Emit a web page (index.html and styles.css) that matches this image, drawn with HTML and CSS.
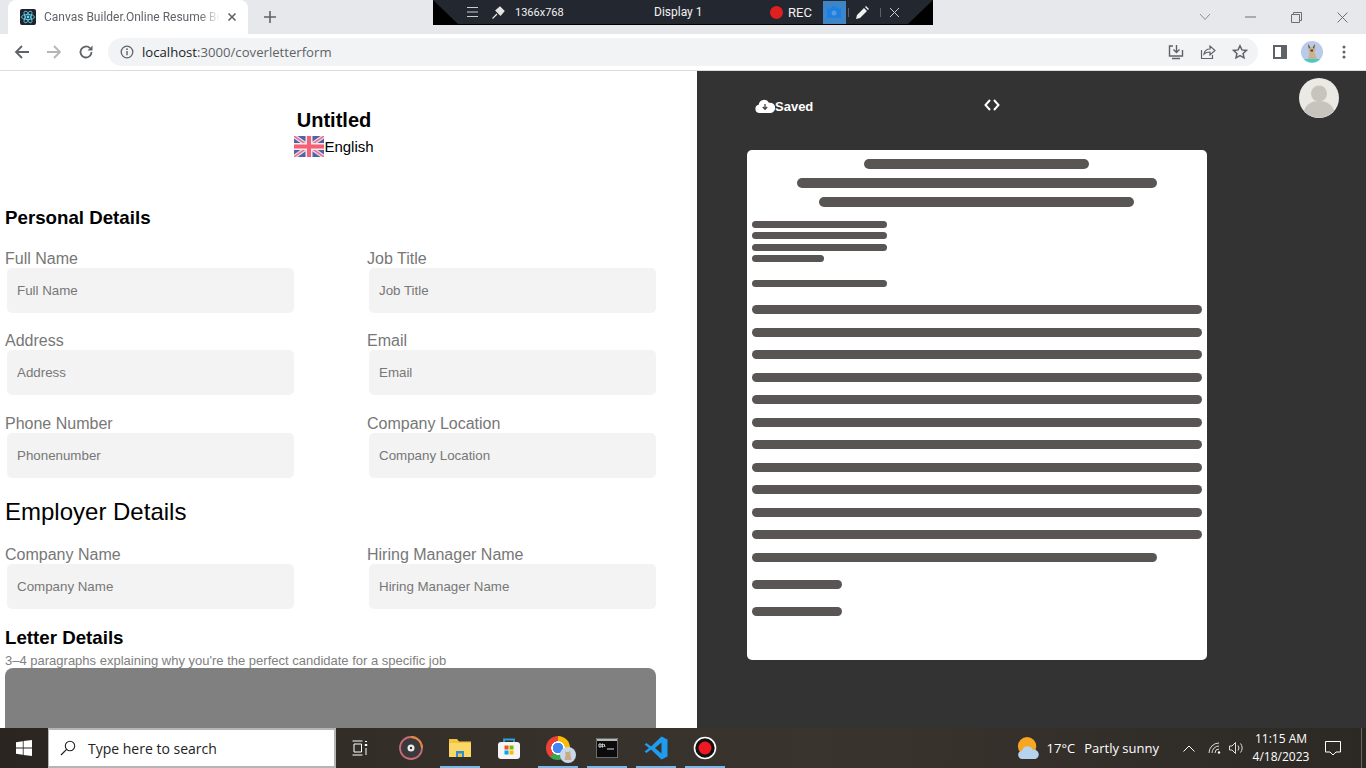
FILE: index.html
```html
<!DOCTYPE html>
<html>
  <head>
    <meta charset="UTF-8" />
    <title>Canvas Builder.Online Resume Builder</title>
    <link rel="stylesheet" href="styles.css">
  </head>
  <body>
    <div class="screen">
      <!-- browser chrome -->
      <div class="tabstrip">
        <div class="tab">
          <svg class="favicon" viewBox="0 0 16 16" width="16" height="16">
            <rect width="16" height="16" rx="2" fill="#20232a"/>
            <g fill="none" stroke="#61dafb" stroke-width="0.8">
              <ellipse cx="8" cy="8" rx="6.5" ry="2.6"/>
              <ellipse cx="8" cy="8" rx="6.5" ry="2.6" transform="rotate(60 8 8)"/>
              <ellipse cx="8" cy="8" rx="6.5" ry="2.6" transform="rotate(120 8 8)"/>
            </g>
            <circle cx="8" cy="8" r="1.4" fill="#61dafb"/>
          </svg>
          <span class="tab-title">Canvas Builder.Online Resume Builder</span>
          <svg class="tab-close" viewBox="0 0 10 10" width="10" height="10">
            <path d="M1.5 1.5l7 7M8.5 1.5l-7 7" stroke="#5f6368" stroke-width="1.6" fill="none"/>
          </svg>
        </div>
        <svg class="new-tab" viewBox="0 0 12 12" width="12" height="12">
          <path d="M6 0v12M0 6h12" stroke="#5f6368" stroke-width="1.6" fill="none"/>
        </svg>
        <div class="window-controls">
          <svg viewBox="0 0 12 8" width="12" height="8"><path d="M1 1l5 5.5L11 1" stroke="#8a8d91" fill="none"/></svg>
          <svg class="win-min" viewBox="0 0 11 2" width="11" height="2"><path d="M0 1h11" stroke="#6b6e72"/></svg>
          <svg class="win-max" viewBox="0 0 11 11" width="11" height="11"><path d="M.5 2.5h8v8h-8zM2.5 2.5v-2h8v8h-2" stroke="#6b6e72" fill="none"/></svg>
          <svg class="win-close" viewBox="0 0 11 11" width="11" height="11"><path d="M.5.5l10 10M10.5.5l-10 10" stroke="#6b6e72" fill="none"/></svg>
        </div>
      </div>

      <div class="toolbar">
        <svg class="nav-icon" viewBox="0 0 16 16" width="16" height="16"><path d="M15 8H2M8 2L2 8l6 6" stroke="#5f6368" stroke-width="1.8" fill="none"/></svg>
        <svg class="nav-icon" viewBox="0 0 16 16" width="16" height="16"><path d="M1 8h13M8 2l6 6-6 6" stroke="#b4b6b9" stroke-width="1.8" fill="none"/></svg>
        <svg class="nav-icon" viewBox="0 0 16 16" width="16" height="16"><path d="M13.5 8a5.500 5.500 0 1 1-1.600-3.900" stroke="#5f6368" stroke-width="1.8" fill="none"/><path d="M14.500 1.500v5h-5z" fill="#5f6368"/></svg>
        <div class="omnibox">
          <svg viewBox="0 0 14 14" width="14" height="14"><circle cx="7" cy="7" r="5.8" stroke="#5f6368" stroke-width="1.3" fill="none"/><path d="M7 6v4.200" stroke="#5f6368" stroke-width="1.4"/><circle cx="7" cy="4.200" r=".9" fill="#5f6368"/></svg>
          <span class="url">localhost<span class="url-path">:3000/coverletterform</span></span>
          <div class="omni-actions">
            <svg viewBox="0 0 16 16" width="16" height="16"><path d="M5 2H1.500v10h13V6M8.500 1v7M5.500 5.500l3 3 3-3M4 14.500h8" stroke="#5f6368" stroke-width="1.4" fill="none"/></svg>
            <svg viewBox="0 0 16 16" width="16" height="16"><path d="M1.500 6v8.500h11V11M4 10c.5-3 3-5 6-5V2l5 4.500L10 11V8c-2.500 0-4.500.5-6 2z" stroke="#5f6368" stroke-width="1.2" fill="none"/></svg>
            <svg viewBox="0 0 16 16" width="16" height="16"><path d="M8 1.800l1.900 4.100 4.500.5-3.300 3 .9 4.400L8 11.600l-4 2.200.9-4.400-3.300-3 4.500-.5z" stroke="#5f6368" stroke-width="1.5" fill="none"/></svg>
          </div>
        </div>
        <div class="side-panel-icon"><span></span></div>
        <svg class="profile" viewBox="0 0 22 22" width="22" height="22">
          <circle cx="11" cy="11" r="11" fill="#b9cbe8"/>
          <path d="M3 18h16a11 11 0 0 1-16 0z" fill="#3fcfc0"/>
          <path d="M7 3l2 3h3l2-3 .5 6-1 2 2.500 7H7l1.500-7-1-2z" fill="#cdb08e"/>
          <path d="M7 3l2 3-1 2zM14 3l-2 3 1 2zM9.500 8.500h2.500v2H9.500z" fill="#4b3d35"/>
        </svg>
        <svg class="menu-dots" viewBox="0 0 4 14" width="4" height="14"><circle cx="2" cy="2" r="1.5" fill="#5f6368"/><circle cx="2" cy="7" r="1.5" fill="#5f6368"/><circle cx="2" cy="12" r="1.5" fill="#5f6368"/></svg>
      </div>

      <!-- page -->
      <div class="page">
        <div class="form-pane">
          <div class="doc-head">
            <h1>Untitled</h1>
            <div class="lang">
              <svg class="flag" viewBox="0 0 30 21" width="30" height="21">
                <rect width="30" height="21" rx="3" fill="#5262a8"/>
                <path d="M0 0l30 21M30 0L0 21" stroke="#e6dfec" stroke-width="4"/>
                <path d="M0 0l30 21M30 0L0 21" stroke="#ee6f86" stroke-width="1.5"/>
                <path d="M15 0v21M0 10.500h30" stroke="#f2e9ef" stroke-width="7"/>
                <path d="M15 0v21M0 10.500h30" stroke="#f65f74" stroke-width="4"/>
              </svg>
              <span>English</span>
            </div>
          </div>

          <h3 class="section-title personal">Personal Details</h3>
          <div class="field-grid">
            <label class="field">Full Name<input type="text" placeholder="Full Name" /></label>
            <label class="field">Job Title<input type="text" placeholder="Job Title" /></label>
            <label class="field">Address<input type="text" placeholder="Address" /></label>
            <label class="field">Email<input type="text" placeholder="Email" /></label>
            <label class="field">Phone Number<input type="text" placeholder="Phonenumber" /></label>
            <label class="field">Company Location<input type="text" placeholder="Company Location" /></label>
          </div>

          <h2 class="employer-title">Employer Details</h2>
          <div class="field-grid">
            <label class="field">Company Name<input type="text" placeholder="Company Name" /></label>
            <label class="field">Hiring Manager Name<input type="text" placeholder="Hiring Manager Name" /></label>
          </div>

          <h3 class="section-title letter">Letter Details</h3>
          <p class="hint">3–4 paragraphs explaining why you're the perfect candidate for a specific job</p>
          <div class="letter-box"></div>
        </div>

        <div class="preview-pane">
          <div class="preview-head">
            <div class="saved">
              <svg viewBox="0 0 20 14" width="20" height="14">
                <path d="M4.500 14a4.200 4.200 0 0 1-.8-8.300A5.500 5.500 0 0 1 14 3.800 3.500 3.500 0 0 1 16 14z" fill="#fff"/>
                <path d="M10 5v5M7.800 8L10 10.300 12.200 8" stroke="#444" stroke-width="1.3" fill="none"/>
              </svg>
              <span>Saved</span>
            </div>
            <svg class="code-icon" viewBox="0 0 16 12" width="16" height="12"><path d="M6 1L1.500 6 6 11M10 1l4.500 5L10 11" stroke="#fff" stroke-width="2" fill="none"/></svg>
            <svg class="user-avatar" viewBox="0 0 40 40" width="40" height="40">
              <circle cx="20" cy="20" r="20" fill="#ebe9e4"/>
              <circle cx="20" cy="15.500" r="8" fill="#c6c4bd"/>
              <path d="M5 33c2-7 8-10 15-10s13 3 15 10a20 20 0 0 1-30 0z" fill="#c6c4bd"/>
            </svg>
          </div>
          <div class="paper">
            <div class="heading-bars">
              <div class="bar bar-h w-225"></div>
              <div class="bar bar-h w-360"></div>
              <div class="bar bar-h w-315"></div>
            </div>
            <div class="address-bars">
              <div class="bar bar-s w-135"></div>
              <div class="bar bar-s w-135"></div>
              <div class="bar bar-s w-135"></div>
              <div class="bar bar-s w-72"></div>
            </div>
            <div class="bar bar-s w-135 greeting"></div>
            <div class="body-bars">
              <div class="bar bar-b"></div>
              <div class="bar bar-b"></div>
              <div class="bar bar-b"></div>
              <div class="bar bar-b"></div>
              <div class="bar bar-b"></div>
              <div class="bar bar-b"></div>
              <div class="bar bar-b"></div>
              <div class="bar bar-b"></div>
              <div class="bar bar-b"></div>
              <div class="bar bar-b"></div>
              <div class="bar bar-b"></div>
              <div class="bar bar-b w-405"></div>
            </div>
            <div class="sign-bars">
              <div class="bar bar-b w-90"></div>
              <div class="bar bar-b w-90"></div>
            </div>
          </div>
        </div>
      </div>

      <!-- windows taskbar -->
      <div class="taskbar">
        <div class="start">
          <svg viewBox="0 0 16 16" width="16" height="16"><path d="M0 2.200L6.800 1.200V7.600H0zM7.600 1.100L16 0V7.600H7.600zM0 8.400H6.800V14.800L0 13.800zM7.600 8.400H16V16L7.600 14.900z" fill="#fff"/></svg>
        </div>
        <div class="search">
          <svg viewBox="0 0 16 16" width="16" height="16"><circle cx="10" cy="6" r="4.700" stroke="#222" stroke-width="1.1" fill="none"/><path d="M6.600 9.400L1 15" stroke="#222" stroke-width="1.3"/></svg>
          <span>Type here to search</span>
        </div>
        <div class="task-icons">
          <div class="task-icon">
            <svg class="task-view" viewBox="0 0 16 16" width="16" height="16"><path d="M.5 1h10M.5 15h10M2 4h7.500v8H2zM13 1.500h2M13 4.500h2v1h-2zM14 8v7" stroke="#fff" fill="none"/></svg>
          </div>
          <div class="task-icon">
            <svg viewBox="0 0 24 24" width="24" height="24">
              <circle cx="12" cy="12" r="11" fill="#3a3a3c" stroke="#c96a78" stroke-width="1.8"/>
              <path d="M12 1a11 11 0 0 1 11 11" fill="none" stroke="#e58a3c" stroke-width="1.8"/>
              <circle cx="12" cy="12" r="3.500" fill="#eee"/>
              <circle cx="12" cy="12" r="1.200" fill="#333"/>
            </svg>
          </div>
          <div class="task-icon running">
            <svg viewBox="0 0 22 20" width="22" height="20">
              <path d="M0 1h8l2 2.500h12V19H0z" fill="#f3c444"/>
              <path d="M0 5h22v14H0z" fill="#fbd866"/>
              <path d="M7 13h8v6H7z" fill="#2b8fd8"/>
              <path d="M9 15.500h4V19H9z" fill="#f3c444"/>
            </svg>
          </div>
          <div class="task-icon">
            <svg viewBox="0 0 24 24" width="24" height="24">
              <path d="M7 7V3.500h10V7" stroke="#27a6e0" stroke-width="1.8" fill="none"/>
              <rect x="1" y="6" width="22" height="17" rx="3" fill="#f4f4f4"/>
              <rect x="7.500" y="9.500" width="4" height="4" fill="#f25022"/>
              <rect x="12.500" y="9.500" width="4" height="4" fill="#7fba00"/>
              <rect x="7.500" y="14.500" width="4" height="4" fill="#00a4ef"/>
              <rect x="12.500" y="14.500" width="4" height="4" fill="#ffb900"/>
            </svg>
          </div>
          <div class="task-icon running">
            <div class="chrome-logo"></div>
            <svg class="chrome-badge" viewBox="0 0 16 16" width="16" height="16">
              <circle cx="8" cy="8" r="8" fill="#c9d8ea"/>
              <path d="M5 3l1 2h3l1-2 .5 5 1 5h-7l1-5z" fill="#c9a988"/>
            </svg>
          </div>
          <div class="task-icon running">
            <svg viewBox="0 0 22 20" width="22" height="20">
              <rect width="22" height="20" fill="#3d3d3d" stroke="#999"/>
              <rect x="1" y="3" width="20" height="16" fill="#0c0c0c"/>
              <rect x="1" y="1" width="20" height="2" fill="#b8b8b8"/>
              <path d="M3 6h2v3H3zM6 6h1v1H6zM6 8h1v1H6zM8 6l1 3M11 11h7" stroke="#ddd" fill="none"/>
            </svg>
          </div>
          <div class="task-icon running">
            <svg viewBox="0 0 24 24" width="24" height="24">
              <path d="M17.500 0.500L23.500 3.500V20.500L17.500 23.500L7 13.500L2.500 17L0.500 15.500L5 12L0.500 8.500L2.500 7L7 10.500z M17.500 6.500L11 12L17.500 17.500z" fill="#1f9cf0" fill-rule="evenodd"/>
            </svg>
          </div>
          <div class="task-icon running">
            <svg viewBox="0 0 24 24" width="24" height="24">
              <circle cx="12" cy="12" r="10.500" fill="#111" stroke="#fff" stroke-width="1.6"/>
              <circle cx="12" cy="12" r="6.500" fill="#f01822"/>
            </svg>
          </div>
        </div>
        <div class="tray">
          <svg class="weather" viewBox="0 0 24 24" width="22" height="22">
            <circle cx="11" cy="10" r="10" fill="#f6a623"/>
            <path d="M6 24a4.500 4.500 0 0 1-.5-9 6 6 0 0 1 11.500-1 5 5 0 0 1 3 10z" fill="#b5d2ee"/>
          </svg>
          <span class="temp">17°C</span>
          <span class="forecast">Partly sunny</span>
          <svg class="tray-chevron" viewBox="0 0 12 7" width="12" height="7"><path d="M.5 6.500L6 1l5.500 5.500" stroke="#fff" fill="none"/></svg>
          <svg class="tray-wifi" viewBox="0 0 14 12" width="14" height="12"><path d="M1 11a10 10 0 0 1 10-10M4 11a7 7 0 0 1 7-7M7 11a4 4 0 0 1 4-4" stroke="#ddd" fill="none"/><circle cx="11" cy="10.500" r="1.200" fill="#fff"/></svg>
          <svg class="tray-sound" viewBox="0 0 16 12" width="16" height="12"><path d="M.5 4h2.500L6.500.5v11L3 8H.5zM9 3.500a4 4 0 0 1 0 5M11.500 1.500a7 7 0 0 1 0 9" stroke="#ddd" fill="none"/></svg>
          <div class="clock"><span>11:15 AM</span><span>4/18/2023</span></div>
          <svg class="notify" viewBox="0 0 16 15" width="16" height="15"><path d="M.5.500h15v10.500h-4.500L8 14l-3-3H.5z" stroke="#fff" fill="none"/></svg>
          <div class="show-desktop"></div>
        </div>
      </div>

      <!-- screen recorder bar sits over the tab strip -->
      <div class="recorder">
        <div class="recorder-inner">
          <svg class="rec-menu" viewBox="0 0 11 10" width="11" height="10"><path d="M0 .5h11M0 5h11M0 9.500h11" stroke="#c9ccd0"/></svg>
          <svg class="rec-pin" viewBox="0 0 13 13" width="13" height="13"><path d="M0.500 12.500L5 8M4 4.500L8 1l4 4-3.500 4z" stroke="#e4e4e4" stroke-width="1.2" fill="#e4e4e4"/></svg>
          <span class="rec-size">1366x768</span>
          <span class="rec-display">Display 1</span>
          <span class="rec-dot"></span>
          <span class="rec-label">REC</span>
          <div class="rec-camera">
            <svg viewBox="0 0 14 12" width="14" height="12"><path d="M0 2.500h3.500L5 .5h4l1.500 2H14V12H0z" fill="#1a7fe6"/><circle cx="7" cy="7" r="2.500" fill="#5a9ad6"/></svg>
          </div>
          <span class="rec-sep"></span>
          <svg class="rec-pen" viewBox="0 0 13 13" width="13" height="13"><path d="M0 13l1-4 7-7 3 3-7 7zM9 1l1-1 3 3-1 1z" fill="#f0f0f0"/></svg>
          <span class="rec-sep"></span>
          <svg class="rec-close" viewBox="0 0 9 9" width="9" height="9"><path d="M0 0l9 9M9 0L0 9" stroke="#c9ccd0"/></svg>
        </div>
      </div>
    </div>
  </body>
</html>
```

FILE: styles.css
```css
* {
  box-sizing: border-box;
}

html,
body {
  margin: 0;
  height: 100%;
  overflow: hidden;
}

body {
  font-family: "Liberation Sans", Arial, sans-serif;
  background-color: #fff;
}

.screen {
  position: relative;
  width: 1366px;
  height: 768px;
  display: flex;
  flex-direction: column;
  overflow: hidden;
}

/* tab strip */
.tabstrip {
  height: 34px;
  flex-shrink: 0;
  display: flex;
  align-items: center;
  padding-left: 8px;
  background-color: #e7e8ec;
}

.tab {
  width: 240px;
  height: 34px;
  display: flex;
  align-items: center;
  padding: 0 11px 0 12px;
  background-color: #fff;
  border-radius: 8px 8px 0 0;
}

.favicon {
  flex-shrink: 0;
}

.tab-title {
  width: 176px;
  margin-left: 8px;
  overflow: hidden;
  white-space: nowrap;
  font-family: Roboto, sans-serif;
  font-size: 12px;
  color: #5f6368;
  -webkit-mask-image: linear-gradient(to right, #000 88%, transparent);
  mask-image: linear-gradient(to right, #000 88%, transparent);
}

.tab-close {
  margin-left: 7px;
  flex-shrink: 0;
}

.new-tab {
  margin-left: 16px;
}

.window-controls {
  margin-left: auto;
  display: flex;
  align-items: center;
  padding-right: 18px;
}

.win-min {
  margin-left: 34px;
}

.win-max {
  margin-left: 35px;
}

.win-close {
  margin-left: 35px;
}

/* address bar */
.toolbar {
  height: 37px;
  flex-shrink: 0;
  display: flex;
  align-items: center;
  padding: 0 18px 1px 14px;
  background-color: #fff;
  border-bottom: 1px solid #dadce0;
}

.nav-icon {
  margin-right: 16px;
}

.omnibox {
  width: 1150px;
  height: 28px;
  margin-left: -2px;
  display: flex;
  align-items: center;
  padding: 0 10px 0 12px;
  background-color: #f1f3f4;
  border-radius: 14px;
}

.url {
  margin-left: 8px;
  font-family: "Open Sans", sans-serif;
  font-size: 13.15px;
  color: #202124;
}

.url-path {
  color: #5f6368;
}

.omni-actions {
  margin-left: auto;
  display: flex;
  gap: 16px;
}

.side-panel-icon {
  width: 14px;
  height: 14px;
  margin-left: 15px;
  padding: 2px 6px 2px 2px;
  background-color: #5f6368;
}

.side-panel-icon span {
  display: block;
  height: 100%;
  background-color: #fff;
}

.profile {
  margin-left: 14px;
}

.menu-dots {
  margin-left: 19px;
}

/* page */
.page {
  flex: 1;
  min-height: 0;
  display: flex;
}

.form-pane {
  width: 697px;
  flex-shrink: 0;
  padding: 0 41px 0 5px;
  overflow: hidden;
  background-color: #fff;
}

.doc-head {
  display: flex;
  flex-direction: column;
  align-items: center;
  padding: 38px 0 0 7px;
  height: 134px;
}

.doc-head h1 {
  margin: 0;
  font-size: 20px;
  line-height: 22px;
  font-weight: bold;
  color: #000;
}

.lang {
  display: flex;
  align-items: center;
  margin-top: 5px;
  font-size: 15px;
  line-height: 21px;
  color: #000;
}

.section-title {
  margin: 0;
  font-size: 18.72px;
  line-height: 24px;
  font-weight: bold;
  color: #000;
}

.personal {
  margin-top: 1px;
}

.field-grid {
  display: grid;
  grid-template-columns: 362px 289px;
  row-gap: 19.5px;
}

.personal + .field-grid {
  margin-top: 19.75px;
}

.field {
  display: block;
  font-size: 16px;
  line-height: 17px;
  color: #777;
}

.field input {
  display: block;
  width: 287px;
  height: 45px;
  margin: 1px 0 0 2px;
  padding: 0 10px;
  border: none;
  border-radius: 5px;
  outline: none;
  background-color: #f3f3f3;
  font-family: "Liberation Sans", Arial, sans-serif;
  font-size: 13.333px;
  color: #333;
}

.field input::placeholder {
  color: #777;
  opacity: 1;
}

.employer-title {
  margin: 20.25px 0 20px;
  font-size: 24px;
  line-height: 28px;
  font-weight: normal;
  color: #000;
}

.letter {
  margin-top: 17px;
}

.hint {
  margin: 3px 0 0;
  font-size: 13px;
  line-height: 15px;
  color: #808080;
}

.letter-box {
  height: 120px;
  background-color: #808080;
  border-radius: 8px 8px 0 0;
}

/* preview */
.preview-pane {
  flex: 1;
  min-width: 0;
  padding: 0 27px 0 50px;
  background-color: #333;
}

.preview-head {
  height: 79px;
  display: flex;
  align-items: flex-start;
}

.saved {
  display: flex;
  align-items: center;
  width: 229px;
  margin: 28px 0 0 8px;
  font-size: 13px;
  font-weight: bold;
  color: #fff;
}

.saved svg {
  margin-top: -1px;
}

.code-icon {
  margin-top: 28px;
}

.user-avatar {
  margin: 7px 0 0 auto;
}

.paper {
  width: 460px;
  height: 510px;
  padding: 9px 5px 0;
  background-color: #fff;
  border-radius: 5px;
}

.bar {
  background-color: #5a5555;
  border-radius: 5px;
}

.bar-h {
  height: 10px;
}

.bar-s {
  height: 7px;
}

.bar-b {
  height: 9px;
}

.w-72 { width: 72px; }
.w-90 { width: 90px; }
.w-135 { width: 135px; }
.w-225 { width: 225px; }
.w-315 { width: 315px; }
.w-360 { width: 360px; }
.w-405 { width: 405px; }

.heading-bars {
  display: flex;
  flex-direction: column;
  align-items: center;
  gap: 9px;
  padding-right: 1px;
}

.address-bars {
  display: flex;
  flex-direction: column;
  gap: 4.5px;
  margin-top: 13.75px;
}

.greeting {
  margin-top: 18px;
}

.body-bars {
  display: flex;
  flex-direction: column;
  gap: 13.5px;
  margin-top: 17.75px;
}

.sign-bars {
  display: flex;
  flex-direction: column;
  gap: 18px;
  margin-top: 18.5px;
}

/* taskbar */
.taskbar {
  height: 40px;
  flex-shrink: 0;
  display: flex;
  align-items: center;
  background: linear-gradient(to right, #2a2520, #35302a 35%, #3a342e 60%, #2c2925);
  color: #fff;
}

.start {
  width: 48px;
  height: 40px;
  display: flex;
  align-items: center;
  justify-content: center;
}

.search {
  width: 288px;
  height: 40px;
  display: flex;
  align-items: center;
  gap: 12px;
  padding-left: 11px;
  background-color: #fff;
  border: 2px solid #b5b5b5;
  border-left-width: 1px;
  font-family: "Open Sans", sans-serif;
  font-size: 14px;
  color: #222;
}

.task-icons {
  display: flex;
  margin-left: 1px;
}

.task-icon {
  position: relative;
  width: 49px;
  height: 40px;
  display: flex;
  align-items: center;
  justify-content: center;
}

.task-icon.running::after {
  content: "";
  position: absolute;
  left: 5px;
  right: 4px;
  bottom: 0;
  height: 2px;
  background-color: #76b9ed;
}

.task-view {
  margin-right: 3px;
}

.chrome-logo {
  width: 24px;
  height: 24px;
  border-radius: 50%;
  background:
    radial-gradient(circle, #4285f4 0 5px, #fff 5.5px 6.5px, transparent 7px),
    conic-gradient(#fbbc05 0 120deg, #34a853 120deg 220deg, #ea4335 220deg 360deg);
}

.chrome-badge {
  position: absolute;
  left: 27px;
  top: 19px;
}

.tray {
  margin-left: auto;
  display: flex;
  align-items: center;
  font-family: "Open Sans", sans-serif;
  font-size: 13px;
}

.temp {
  margin-left: 8px;
}

.forecast {
  margin-left: 9px;
}

.tray-chevron {
  margin-left: 24px;
}

.tray-wifi {
  margin-left: 13px;
}

.tray-sound {
  margin-left: 7px;
}

.clock {
  display: flex;
  flex-direction: column;
  align-items: center;
  width: 60px;
  margin-left: 6px;
  font-size: 12px;
  line-height: 18px;
}

.notify {
  margin-left: 14px;
}

.show-desktop {
  width: 1px;
  height: 40px;
  margin: 0 4px 0 20px;
  background-color: #6b6763;
}

/* recorder overlay */
.recorder {
  position: absolute;
  top: 0;
  left: 433px;
  width: 500px;
  height: 25px;
  background-color: #000;
}

.recorder-inner {
  height: 24px;
  display: flex;
  align-items: center;
  padding-left: 34px;
  background-color: #232830;
  clip-path: polygon(0 0, 100% 0, 95% 100%, 5% 100%);
  font-family: Roboto, sans-serif;
  font-size: 12px;
  color: #f2f2f2;
}

.rec-pin {
  margin-left: 14px;
}

.rec-size {
  width: 48px;
  margin-left: 10px;
  font-size: 11px;
  white-space: nowrap;
}

.rec-display {
  width: 50px;
  margin-left: 91px;
  white-space: nowrap;
}

.rec-dot {
  width: 13px;
  height: 13px;
  margin-left: 66px;
  border-radius: 50%;
  background-color: #e02020;
}

.rec-label {
  margin-left: 5px;
  font-size: 13px;
}

.rec-camera {
  width: 23px;
  height: 23px;
  margin-left: 11px;
  display: flex;
  align-items: center;
  justify-content: center;
  background-color: #3d85c6;
}

.rec-sep {
  width: 1px;
  height: 9px;
  margin-left: 2px;
  background-color: #5d6268;
}

.rec-pen {
  margin: 0 9px 0 7px;
}

.rec-close {
  margin-left: 9px;
}
```
